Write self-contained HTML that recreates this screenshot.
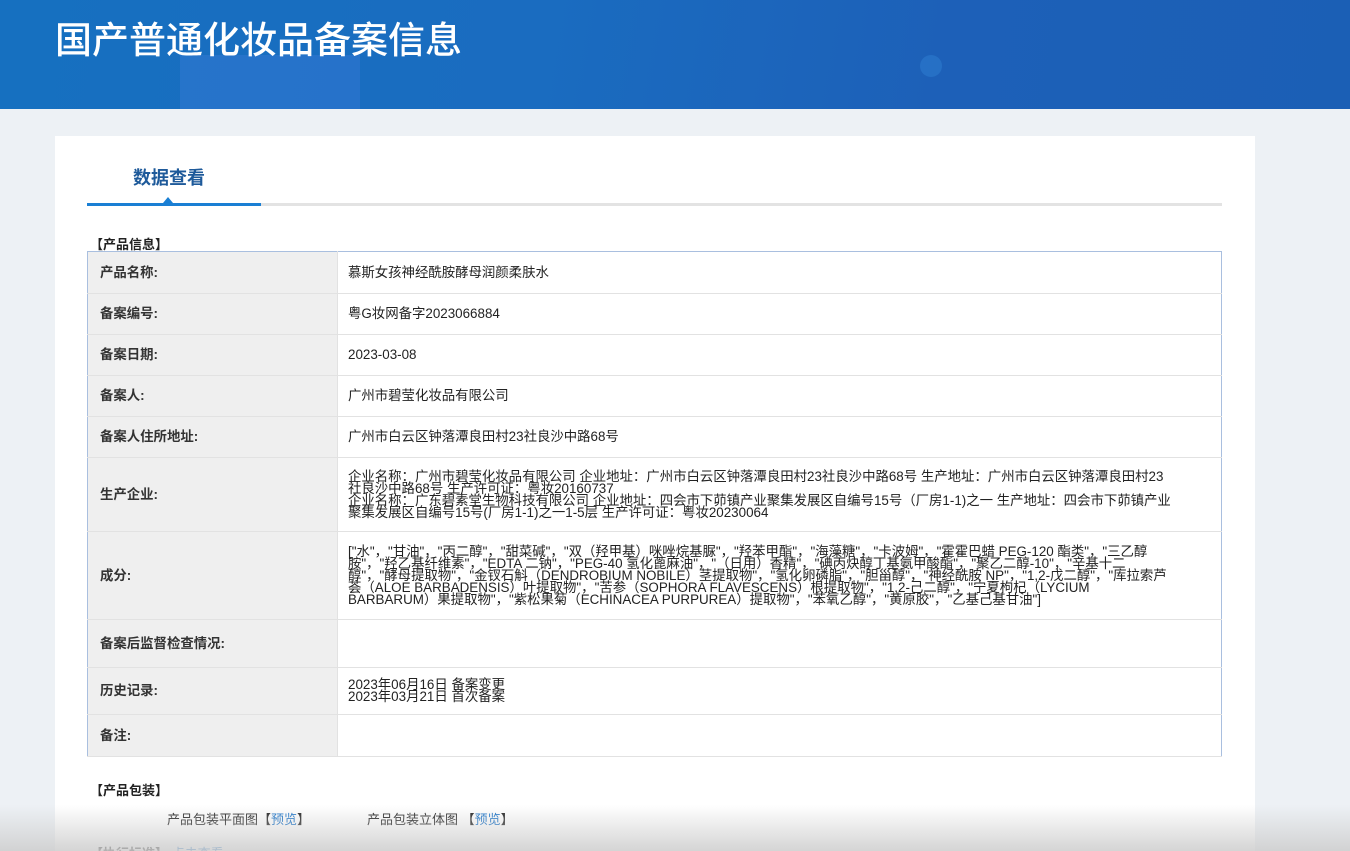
<!DOCTYPE html>
<html><head><meta charset="utf-8"><style>
*{margin:0;padding:0;box-sizing:border-box}
html,body{width:1350px;height:851px;overflow:hidden}
body{background:#edf1f5;font-family:"Liberation Sans","Noto Sans CJK SC",sans-serif;color:#222;position:relative}
.hdr{position:absolute;left:0;top:0;width:1350px;height:109px;background:linear-gradient(100deg,#1670c0 0%,#1a6cc0 40%,#1d60b8 70%,#1b5fb5 100%);overflow:hidden}
.hdr .t{position:absolute;left:55px;top:10px;font-size:37px;color:#fff;font-weight:500}
.card{position:absolute;left:55px;top:136px;width:1200px;height:715px;background:#fff}
.tab{position:absolute;left:133px;top:164px;font-size:18px;font-weight:bold;color:#1e5a9a}
.line{position:absolute;left:87px;top:203px;width:1135px;height:3px;background:#e3e3e3}
.line2{position:absolute;left:87px;top:203px;width:174px;height:3px;background:#1a7fd4}
.tri{position:absolute;left:163px;top:197px;width:0;height:0;border-left:5px solid transparent;border-right:5px solid transparent;border-bottom:6px solid #1a7fd4}
.sec{position:absolute;font-size:13px;font-weight:bold}
table{position:absolute;left:87px;top:251px;width:1135px;border-collapse:collapse;border:1px solid #a9bfdf;font-size:13.4px}
td{border-bottom:1px solid #e2e2e2;vertical-align:middle;line-height:12px}
td.l{width:250px;background:#efefef;padding-left:12px;font-weight:bold;color:#333;border-right:1px solid #e2e2e2}
td.v{padding-left:10px;padding-right:50px}
a{color:#1a73c8;text-decoration:none}
.fade{position:absolute;left:0;top:805px;width:1350px;height:46px;background:linear-gradient(rgba(230,230,230,0),rgba(205,205,205,0.85))}
</style></head><body>
<div class="hdr"><div style="position:absolute;left:180px;top:55px;width:180px;height:60px;background:rgba(80,130,230,0.25)"></div><div style="position:absolute;left:920px;top:55px;width:22px;height:22px;border-radius:50%;background:rgba(60,150,230,0.3)"></div><div class="t">国产普通化妆品备案信息</div></div>
<div class="card"></div>
<div class="tab">数据查看</div>
<div class="line"></div><div class="line2"></div><div class="tri"></div>
<div class="sec" style="left:90px;top:234px">【产品信息】</div>
<table>
<tr style="height:42px"><td class="l">产品名称:</td><td class="v">慕斯女孩神经酰胺酵母润颜柔肤水</td></tr>
<tr style="height:41px"><td class="l">备案编号:</td><td class="v">粤G妆网备字2023066884</td></tr>
<tr style="height:41px"><td class="l">备案日期:</td><td class="v">2023-03-08</td></tr>
<tr style="height:41px"><td class="l">备案人:</td><td class="v">广州市碧莹化妆品有限公司</td></tr>
<tr style="height:41px"><td class="l">备案人住所地址:</td><td class="v">广州市白云区钟落潭良田村23社良沙中路68号</td></tr>
<tr style="height:74px"><td class="l">生产企业:</td><td class="v">企业名称：广州市碧莹化妆品有限公司 企业地址：广州市白云区钟落潭良田村23社良沙中路68号 生产地址：广州市白云区钟落潭良田村23社良沙中路68号 生产许可证：粤妆20160737<br>企业名称：广东碧素堂生物科技有限公司 企业地址：四会市下茆镇产业聚集发展区自编号15号（厂房1-1)之一 生产地址：四会市下茆镇产业聚集发展区自编号15号(厂房1-1)之一1-5层 生产许可证：粤妆20230064</td></tr>
<tr style="height:88px"><td class="l">成分:</td><td class="v">["水"，"甘油"，"丙二醇"，"甜菜碱"，"双（羟甲基）咪唑烷基脲"，"羟苯甲酯"，"海藻糖"，"卡波姆"，"霍霍巴蜡 PEG-120 酯类"，"三乙醇胺"，"羟乙基纤维素"，"EDTA 二钠"，"PEG-40 氢化蓖麻油"，"（日用）香精"，"碘丙炔醇丁基氨甲酸酯"，"聚乙二醇-10"，"辛基十二醇"，"酵母提取物"，"金钗石斛（DENDROBIUM NOBILE）茎提取物"，"氢化卵磷脂"，"胆甾醇"，"神经酰胺 NP"，"1,2-戊二醇"，"库拉索芦荟（ALOE BARBADENSIS）叶提取物"，"苦参（SOPHORA FLAVESCENS）根提取物"，"1,2-己二醇"，"宁夏枸杞（LYCIUM BARBARUM）果提取物"，"紫松果菊（ECHINACEA PURPUREA）提取物"，"苯氧乙醇"，"黄原胶"，"乙基己基甘油"]</td></tr>
<tr style="height:48px"><td class="l">备案后监督检查情况:</td><td class="v"></td></tr>
<tr style="height:47px"><td class="l">历史记录:</td><td class="v">2023年06月16日 备案变更<br>2023年03月21日 首次备案</td></tr>
<tr style="height:42px"><td class="l">备注:</td><td class="v"></td></tr>
</table>
<div class="sec" style="left:90px;top:780px">【产品包装】</div>
<div style="position:absolute;left:167px;top:809px;font-size:13px">产品包装平面图【<a>预览</a>】</div>
<div style="position:absolute;left:367px;top:809px;font-size:13px">产品包装立体图 【<a>预览</a>】</div>
<div class="sec" style="left:90px;top:843px">【执行标准】 <a style="font-weight:normal">点击查看</a></div>
<div class="fade"></div>
</body></html>
